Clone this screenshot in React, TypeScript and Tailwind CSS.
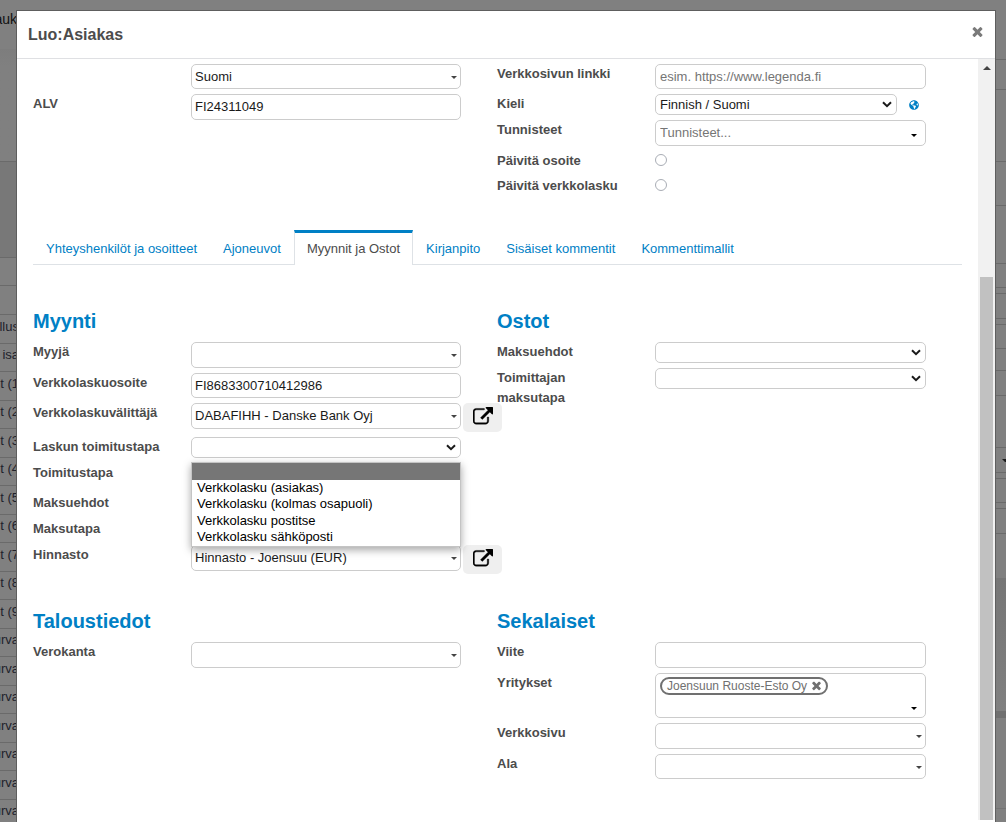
import { useState, type ReactNode } from "react";
import { FaGlobeAmericas } from "react-icons/fa";

const FIELD =
  "block w-full rounded-[5px] border border-[#cccccc] bg-white text-[13px] text-[#1a1a1a] outline-none placeholder:text-[#757575] placeholder:opacity-100";

function Caret({ place = "top-3 right-1", tone = "text-[#444444]" }: { place?: string; tone?: string }) {
  return (
    <svg
      viewBox="0 0 6 3"
      className={`pointer-events-none absolute h-[3px] w-[6px] ${place} ${tone}`}
      aria-hidden="true"
    >
      <path d="M0 0h6L3 3z" fill="currentColor" />
    </svg>
  );
}

function TimesIcon({ className }: { className: string }) {
  return (
    <svg viewBox="0 0 1792 1792" className={className} fill="currentColor" aria-hidden="true">
      <path d="M1490 1322q0 40-28 68l-136 136q-28 28-68 28t-68-28l-294-294-294 294q-28 28-68 28t-68-28l-136-136q-28-28-28-68t28-68l294-294-294-294q-28-28-28-68t28-68l136-136q28-28 68-28t68 28l294 294 294-294q28-28 68-28t68 28l136 136q28 28 28 68t-28 68l-294 294 294 294q28 28 28 68z" />
    </svg>
  );
}

function ExternalIcon() {
  return (
    <svg viewBox="0 0 1792 1792" className="size-5" fill="currentColor" aria-hidden="true">
      <path
        stroke="currentColor"
        strokeWidth="36"
        d="M1408 928v320q0 119-84.5 203.5t-203.5 84.5h-832q-119 0-203.5-84.5t-84.5-203.5v-832q0-119 84.5-203.5t203.5-84.5h704q14 0 23 9t9 23v64q0 14-9 23t-23 9h-704q-66 0-113 47t-47 113v832q0 66 47 113t113 47h832q66 0 113-47t47-113v-320q0-14 9-23t23-9h64q14 0 23 9t9 23zm384-864v512q0 26-19 45t-45 19-45-19l-176-176-652 652q-10 10-23 10t-23-10l-114-114q-10-10-10-23t10-23l652-652-176-176q-19-19-19-45t19-45 45-19h512q26 0 45 19t19 45z"
      />
    </svg>
  );
}

function Row({
  id,
  label,
  children,
  side,
}: {
  id: string;
  label?: string;
  children: ReactNode;
  side?: ReactNode;
}) {
  return (
    <div className="flex items-start">
      <div className="w-[158px] shrink-0 pr-6">
        {label && (
          <label htmlFor={id} className="block text-[13px] leading-5 font-bold text-[#4c4c4c]">
            {label}
          </label>
        )}
      </div>
      <div className="relative min-w-0 flex-1">{children}</div>
      <div className="w-9 shrink-0">{side}</div>
    </div>
  );
}

function TextField({
  id,
  value = "",
  placeholder,
  height = "h-[26px] pb-0.5",
  pad = "pl-[3px]",
}: {
  id: string;
  value?: string;
  placeholder?: string;
  height?: string;
  pad?: string;
}) {
  return (
    <input
      id={id}
      type="text"
      defaultValue={value}
      placeholder={placeholder}
      className={`${FIELD} ${height} ${pad}`}
    />
  );
}

function Combo({ id, value = "", height }: { id: string; value?: string; height?: string }) {
  return (
    <div className="relative">
      <TextField id={id} value={value} height={height} />
      <Caret />
    </div>
  );
}

function Select({ id, options }: { id: string; options: string[] }) {
  return (
    <div className="relative">
      <select id={id} className={`${FIELD} h-[21px] appearance-none pl-1 leading-[19px]`}>
        {options.map((o) => (
          <option key={o}>{o}</option>
        ))}
      </select>
      <svg
        viewBox="0 0 10 7"
        className="pointer-events-none absolute top-[7px] right-[5px] h-[7px] w-[10px]"
        aria-hidden="true"
      >
        <path d="M1 1.2l4 4 4-4" fill="none" stroke="#1a1a1a" strokeWidth="2" />
      </svg>
    </div>
  );
}

function Radio({ id }: { id: string }) {
  return (
    <div className="flex h-5 items-center pb-0.5">
      <input
        id={id}
        type="radio"
        className="size-3 appearance-none rounded-full border border-[#a9adb5] bg-white checked:border-4 checked:border-[#0080c5]"
      />
    </div>
  );
}

function OpenButton({ label }: { label: string }) {
  return (
    <button
      type="button"
      aria-label={label}
      className="ml-[2px] flex h-[29px] w-[39px] items-center justify-center rounded-[5px] bg-[#efefef] pb-0.5 text-black"
    >
      <ExternalIcon />
    </button>
  );
}

function Heading({ children }: { children: ReactNode }) {
  return <h2 className="mb-[9px] text-[20px] leading-6 font-bold text-[#0080c5]">{children}</h2>;
}

const TABS = [
  "Yhteyshenkilöt ja osoitteet",
  "Ajoneuvot",
  "Myynnit ja Ostot",
  "Kirjanpito",
  "Sisäiset kommentit",
  "Kommenttimallit",
];

const DELIVERY = [
  "",
  "Verkkolasku (asiakas)",
  "Verkkolasku (kolmas osapuoli)",
  "Verkkolasku postitse",
  "Verkkolasku sähköposti",
];

const PAGE_ROWS = [
  "llus", "isa", "t (1", "t (2", "t (3", "t (4", "t (5", "t (6", "t (7", "t (8", "t (9",
  "urva", "urva", "urva", "urva", "urva", "urva", "urva",
];

const EDGE_CELLS = [
  "h-[60px]", "h-[30px]", "h-[72px]", "h-[44px]", "h-[58px]", "h-[24px]", "h-[6px]", "h-[25px]",
  "h-[6px]", "h-[24px]", "h-[22px]", "h-[25px]",
];

function Backdrop() {
  return (
    <div className="absolute inset-0 flex justify-between overflow-hidden" aria-hidden="true">
      <div className="flex w-5 flex-col">
        <div className="flex h-[49px] shrink-0 items-start justify-end pt-[9px] pr-[3px] text-[14px] leading-5 text-[#111111]">
          auk
        </div>
        <div className="h-[112px] shrink-0 bg-linear-to-b from-[#7d7d7d] from-0% to-[#808080] to-15%" />
        <div className="h-[97px] shrink-0 border-y border-[#6a6a6a] bg-[#787878]" />
        <div className="h-[28px] shrink-0 border-b border-[#6a6a6a]" />
        <div className="h-[29px] shrink-0 border-b border-[#6a6a6a]" />
        <ul className="grid h-[513px] shrink-0 auto-rows-fr grid-cols-1">
          {PAGE_ROWS.map((t, i) => (
            <li
              key={i}
              className="flex items-center justify-end border-b border-[#6a6a6a] pr-px pb-1 text-[13px] leading-5 whitespace-nowrap text-[#20222c]"
            >
              {t}
            </li>
          ))}
        </ul>
      </div>
      <div className="flex w-[11px] flex-col">
        {EDGE_CELLS.map((h, i) => (
          <div key={i} className={`${h} shrink-0 border-b border-[#6a6a6a]`} />
        ))}
        <div className="h-[52px] shrink-0 border-b border-[#6a6a6a]" />
        <div className="flex h-[25px] shrink-0 items-center justify-end border-b border-[#6a6a6a]">
          <svg viewBox="0 0 4 3" className="h-[3px] w-1">
            <path d="M0 0h4v3H3z" fill="#1a1a1a" />
          </svg>
        </div>
        <div className="h-[6px] shrink-0 border-b border-[#6a6a6a]" />
        <div className="h-[24px] shrink-0 border-b border-[#6a6a6a]" />
        <div className="h-[6px] shrink-0 border-b border-[#6a6a6a]" />
        <div className="h-[25px] shrink-0 border-b border-[#6a6a6a]" />
        <div className="h-[44px] shrink-0" />
        <div className="h-[133px] shrink-0 bg-linear-to-b from-[#767676] to-[#808080]" />
        <div className="h-[7px] shrink-0 bg-[#707070]" />
        <div className="h-[91px] shrink-0 border-b border-[#747474]" />
      </div>
    </div>
  );
}

export default function App() {
  const [tab, setTab] = useState(2);

  return (
    <div className="relative h-screen overflow-hidden bg-[#808080] font-['Liberation_Sans',Arial,sans-serif]">
      <Backdrop />
      <div
        role="dialog"
        aria-labelledby="dialog-title"
        className="relative mt-[10px] mr-[10px] ml-4 flex h-full flex-col border border-[#5e5e5e] bg-white"
      >
        <header className="flex h-12 shrink-0 items-center justify-between border-b border-[#dfe0e3] pr-[10px] pl-[11px]">
          <h1 id="dialog-title" className="text-[16px] leading-6 font-bold text-[#4c4c4c]">
            Luo:Asiakas
          </h1>
          <button type="button" aria-label="Sulje" className="pb-1.5 text-[#7a7a7a]">
            <TimesIcon className="size-[15px]" />
          </button>
        </header>

        <div className="flex min-h-0 flex-1">
          <form className="min-w-0 flex-1 overflow-hidden px-4 pt-[5px]">
            <div className="grid grid-cols-[464fr_465fr]">
              <div className="flex flex-col gap-[5px]">
                <Row id="maa">
                  <Combo id="maa" value="Suomi" height="h-[25px]" />
                </Row>
                <Row id="alv" label="ALV">
                  <TextField id="alv" value="FI24311049" />
                </Row>
              </div>
              <div className="flex flex-col gap-[5px]">
                <Row id="linkki" label="Verkkosivun linkki">
                  <TextField
                    id="linkki"
                    placeholder="esim. https://www.legenda.fi"
                    height="h-[25px]"
                    pad="pl-1"
                  />
                </Row>
                <Row id="kieli" label="Kieli">
                  <div className="flex items-center">
                    <div className="flex-1">
                      <Select id="kieli" options={["Finnish / Suomi"]} />
                    </div>
                    <div className="flex w-[29px] justify-end pr-[7px]">
                      <FaGlobeAmericas className="size-[10px] text-[#0080c5]" />
                    </div>
                  </div>
                </Row>
                <Row id="tunnisteet" label="Tunnisteet">
                  <div className="relative">
                    <TextField id="tunnisteet" placeholder="Tunnisteet..." pad="pl-1" />
                    <Caret place="top-3.5 right-[9px]" tone="text-black" />
                  </div>
                </Row>
                <Row id="paivita-osoite" label="Päivitä osoite">
                  <Radio id="paivita-osoite" />
                </Row>
                <Row id="paivita-verkkolasku" label="Päivitä verkkolasku">
                  <Radio id="paivita-verkkolasku" />
                </Row>
              </div>
            </div>

            <div role="tablist" className="mt-[34px] flex border-b border-[#dee2e6]">
              {TABS.map((t, i) => (
                <button
                  key={t}
                  type="button"
                  role="tab"
                  aria-selected={i === tab}
                  onClick={() => setTab(i)}
                  className={
                    i === tab
                      ? "-mb-px h-[35px] border-x border-t-3 border-x-[#dee2e6] border-t-[#0080c5] bg-white px-3 text-[13px] leading-5 whitespace-nowrap text-[#4c4c4c]"
                      : "h-[34px] border-x border-t-3 border-transparent px-3 text-[13px] leading-5 whitespace-nowrap text-[#0080c5]"
                  }
                >
                  {t}
                </button>
              ))}
            </div>

            <div className="mt-11 grid grid-cols-[464fr_465fr]">
              <section>
                <Heading>Myynti</Heading>
                <div className="flex flex-col gap-[5px]">
                  <Row id="myyja" label="Myyjä">
                    <Combo id="myyja" />
                  </Row>
                  <Row id="verkkolaskuosoite" label="Verkkolaskuosoite">
                    <TextField
                      id="verkkolaskuosoite"
                      value="FI8683300710412986"
                      height="h-[25px]"
                    />
                  </Row>
                  <Row
                    id="valittaja"
                    label="Verkkolaskuvälittäjä"
                    side={<OpenButton label="Avaa välittäjä" />}
                  >
                    <Combo id="valittaja" value="DABAFIHH - Danske Bank Oyj" />
                  </Row>
                  <Row id="laskun-toimitustapa" label="Laskun toimitustapa">
                    <Select id="laskun-toimitustapa" options={DELIVERY} />
                    <ul
                      role="listbox"
                      aria-label="Laskun toimitustapa"
                      className="absolute inset-x-0 top-[25px] z-10 grid h-[85px] auto-rows-fr border border-[#c4c4c4] bg-white text-[13px] leading-4 text-black shadow-[0_3px_8px_rgba(0,0,0,0.35)]"
                    >
                      {DELIVERY.map((d, i) => (
                        <li
                          key={d}
                          role="option"
                          aria-selected={i === 0}
                          className={i === 0 ? "bg-[#767676] pl-[5px]" : "pl-[5px]"}
                        >
                          {d}
                        </li>
                      ))}
                    </ul>
                  </Row>
                  <Row id="toimitustapa" label="Toimitustapa">
                    <Combo id="toimitustapa" height="h-[25px]" />
                  </Row>
                  <Row id="maksuehdot" label="Maksuehdot">
                    <Select id="maksuehdot" options={[""]} />
                  </Row>
                  <Row id="maksutapa" label="Maksutapa">
                    <Select id="maksutapa" options={[""]} />
                  </Row>
                  <Row
                    id="hinnasto"
                    label="Hinnasto"
                    side={<OpenButton label="Avaa hinnasto" />}
                  >
                    <Combo id="hinnasto" value="Hinnasto - Joensuu (EUR)" />
                  </Row>
                </div>
              </section>
              <section>
                <Heading>Ostot</Heading>
                <div className="flex flex-col gap-[5px]">
                  <Row id="osto-maksuehdot" label="Maksuehdot">
                    <Select id="osto-maksuehdot" options={[""]} />
                  </Row>
                  <Row id="toimittajan-maksutapa" label="Toimittajan maksutapa">
                    <Select id="toimittajan-maksutapa" options={[""]} />
                  </Row>
                </div>
              </section>
            </div>

            <div className="mt-[35px] grid grid-cols-[464fr_465fr]">
              <section>
                <Heading>Taloustiedot</Heading>
                <Row id="verokanta" label="Verokanta">
                  <Combo id="verokanta" />
                </Row>
              </section>
              <section>
                <Heading>Sekalaiset</Heading>
                <div className="flex flex-col gap-[5px]">
                  <Row id="viite" label="Viite">
                    <TextField id="viite" />
                  </Row>
                  <Row id="yritykset" label="Yritykset">
                    <div className="flex flex-col items-start rounded-[5px] border border-[#cccccc] bg-white px-1 pt-[3px]">
                      <span className="flex h-[18px] items-center rounded-full border-2 border-[#707070] pr-[3px] pl-[5px] text-[12px] leading-[14px] whitespace-nowrap text-[#707070]">
                        Joensuun Ruoste-Esto Oy
                        <button
                          type="button"
                          aria-label="Poista Joensuun Ruoste-Esto Oy"
                          className="ml-[3px] pb-0.5"
                        >
                          <TimesIcon className="size-[13px]" />
                        </button>
                      </span>
                      <div className="relative h-[22px] w-full">
                        <input
                          id="yritykset"
                          type="text"
                          className="block h-full w-full bg-transparent text-[13px] outline-none"
                        />
                        <Caret place="top-3 right-1" tone="text-black" />
                      </div>
                    </div>
                  </Row>
                  <Row id="verkkosivu" label="Verkkosivu">
                    <Combo id="verkkosivu" />
                  </Row>
                  <Row id="ala" label="Ala">
                    <Combo id="ala" height="h-[25px]" />
                  </Row>
                </div>
              </section>
            </div>
          </form>

          <div className="mb-[11px] flex w-[17px] shrink-0 flex-col items-center bg-[#f1f1f1]" aria-hidden="true">
            <svg viewBox="0 0 8 4" className="mt-[7px] mb-[6px] h-1 w-2 shrink-0">
              <path d="M4 0l4 4H0z" fill="#444444" />
            </svg>
            <div className="flex-[201]" />
            <div className="w-[13px] flex-[544] bg-[#c1c1c1]" />
          </div>
        </div>
      </div>
    </div>
  );
}
